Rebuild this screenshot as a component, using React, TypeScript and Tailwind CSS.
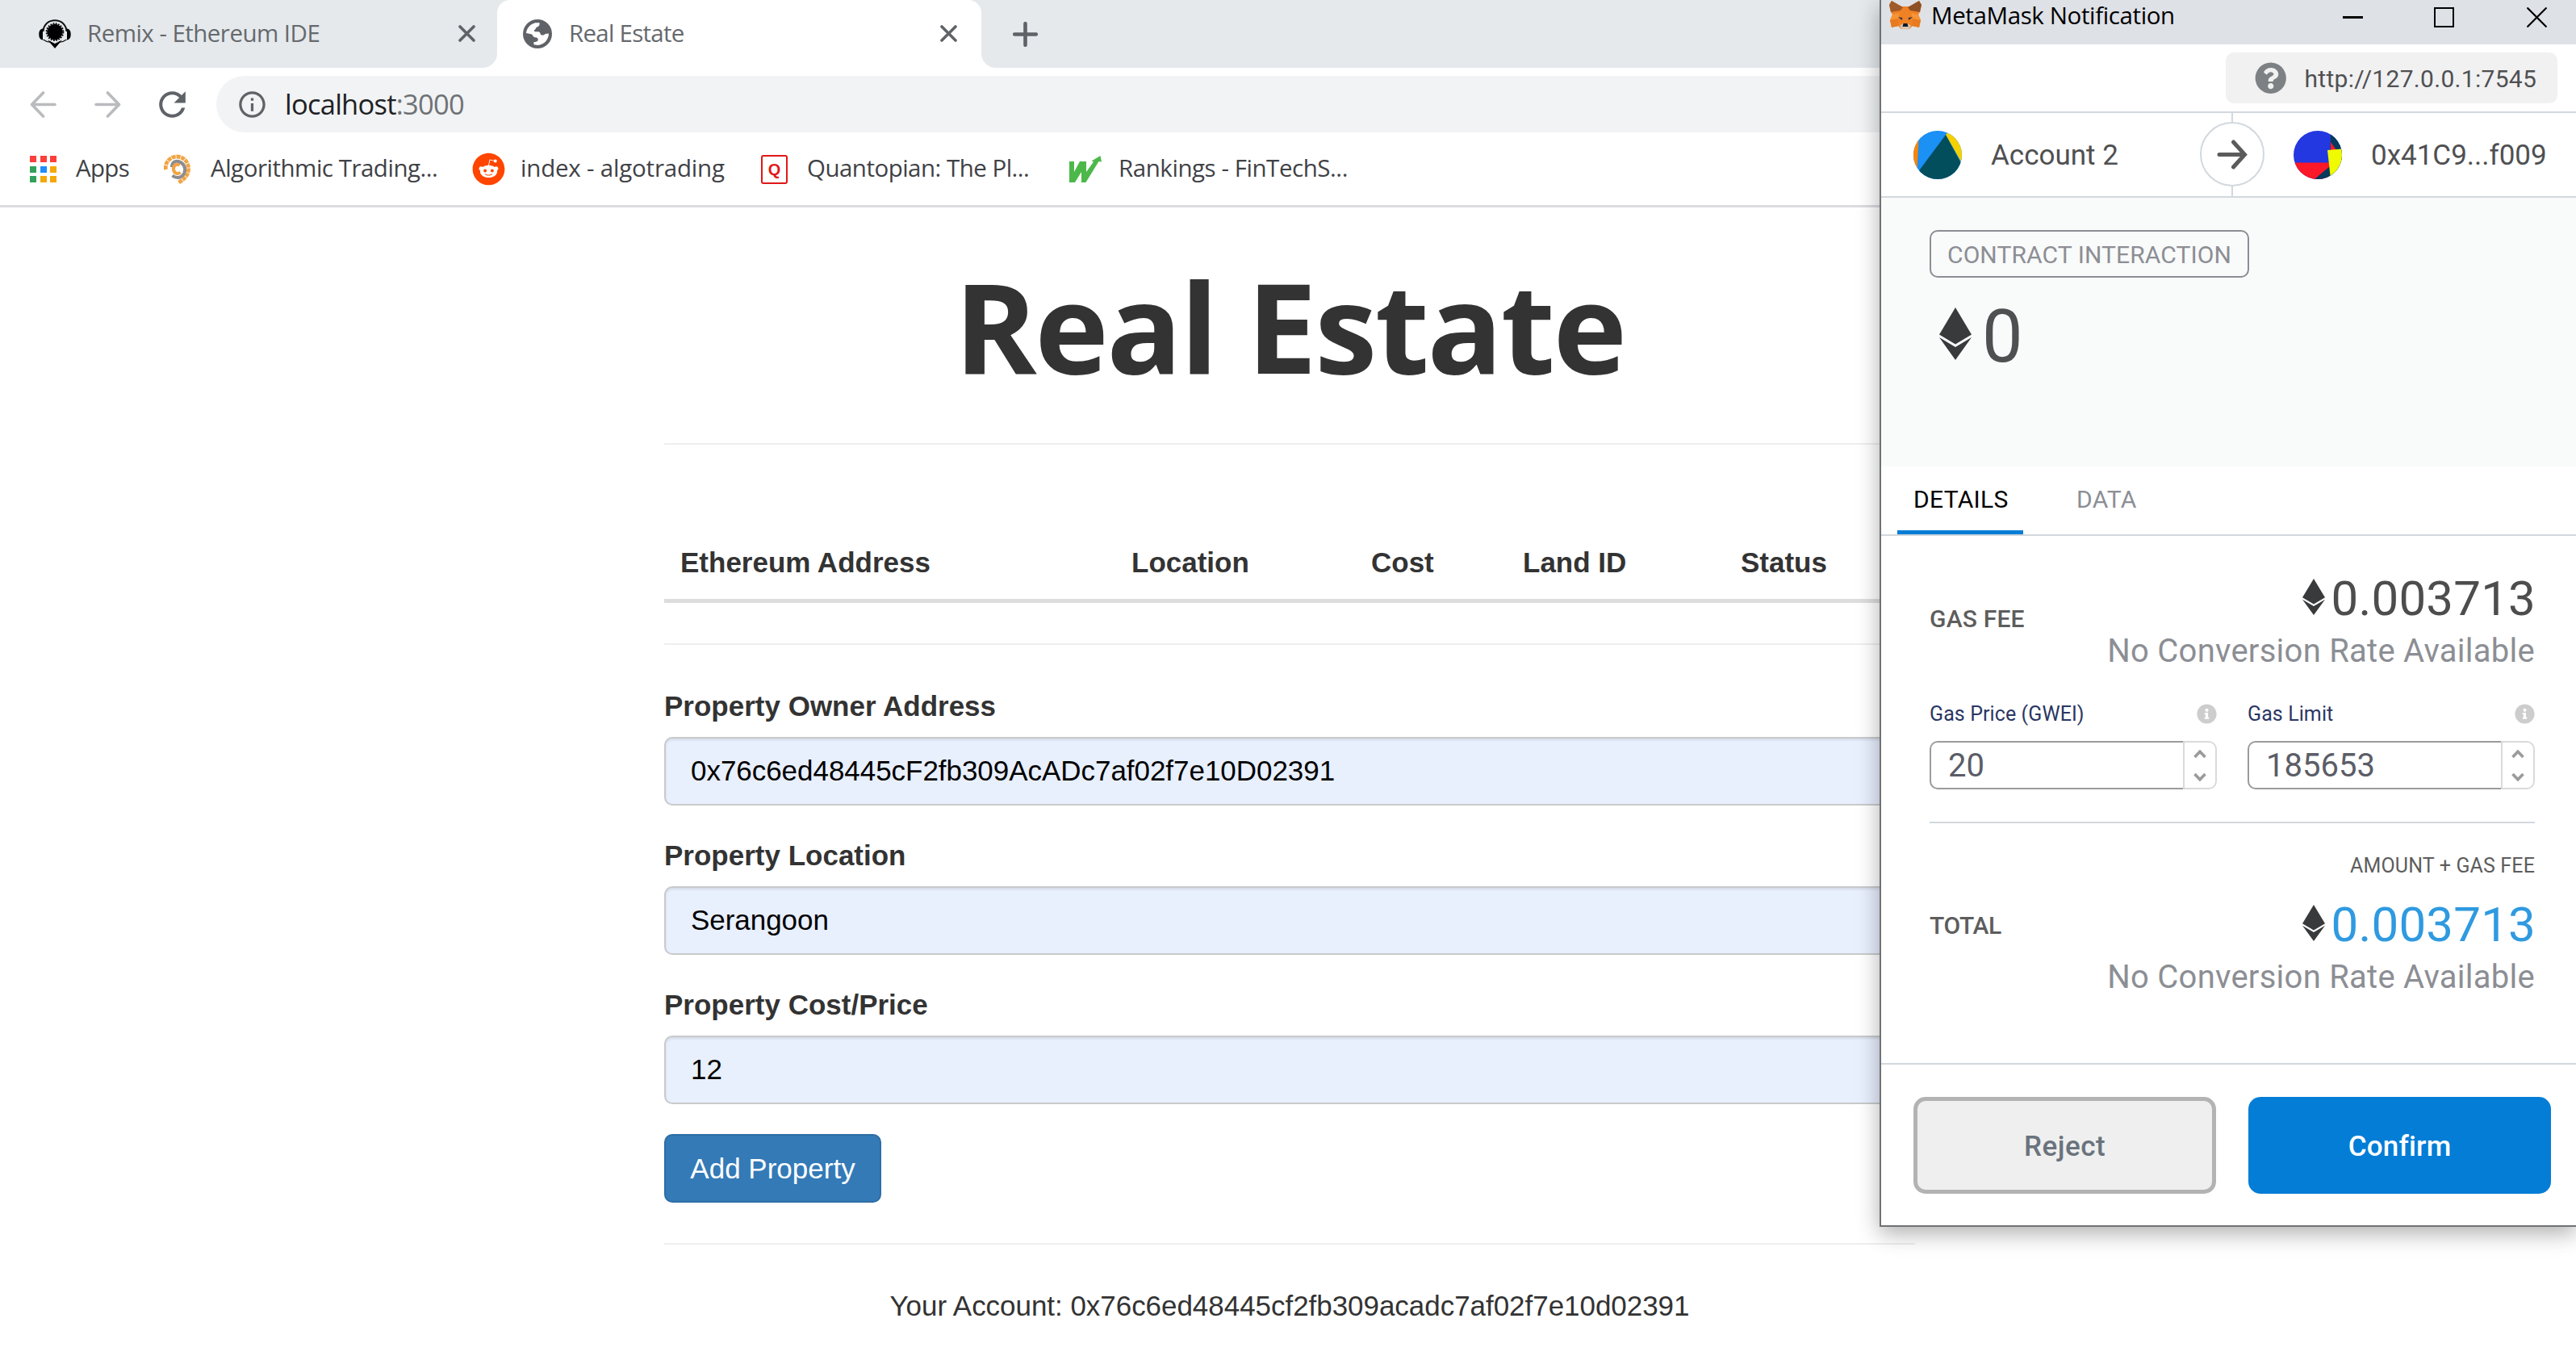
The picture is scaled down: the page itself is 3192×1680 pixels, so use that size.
import React from 'react';
import { FaReddit, FaQuestionCircle, FaInfoCircle } from 'react-icons/fa';
import { MdRefresh, MdInfoOutline } from 'react-icons/md';

function RemixIcon() {
  return (
    <svg width="40" height="36" viewBox="0 0 40 36" className="shrink-0">
      <path d="M5.5 15C6 6 12.500 1.200 20 1.200S34 6 34.500 15" fill="none" stroke="#111" strokeWidth="2" />
      <path d="M5 11.500C1.500 12 .3 14.500 .3 18.500S1.500 25 5 25.500ZM35 11.500c3.500.5 4.700 3 4.700 7S38.500 25 35 25.500Z" fill="#000" />
      <circle cx="20" cy="15.600" r="9.800" fill="#000" />
      <circle cx="20" cy="15.600" r="10.400" fill="none" stroke="#000" strokeWidth="1.800" strokeDasharray="1.800 1.500" />
      <path d="M5.500 25C9 27.500 12 28.500 15 28" fill="none" stroke="#111" strokeWidth="1.300" />
      <path d="M34.500 25C31 27.500 28 28.500 25 28" fill="none" stroke="#111" strokeWidth="1.300" />
      <path d="M11 25.500 20 30 29 25.500 20 36Z" fill="#000" />
    </svg>
  );
}

function GlobeIcon() {
  return (
    <svg width="36" height="36" viewBox="0 0 36 36" className="shrink-0">
      <circle cx="18" cy="18" r="18" fill="#5f6368" />
      <path
        d="M4 17C4.500 11 9 5.500 15.500 4.200L20.500 4.300C21 6.500 20 9 17.500 9.500C15.500 10 16.500 12.500 14 13.200C13 14.500 14.500 15.500 18 15.300C21 15.200 21.500 17 22 19C24 20 27 19.500 27.500 18L32 17.500C32 25 26 31.500 18.500 32L13.500 31.300V28C16 28 18.500 27.500 18.700 25.500C18.800 23 17.500 22.300 15 22.200C12 22 12.500 18.500 10 18.300Z"
        fill="#fff"
      />
    </svg>
  );
}

function CloseIcon() {
  return (
    <svg width="21" height="21" viewBox="0 0 21 21" className="shrink-0">
      <path d="M2 2 19 19M19 2 2 19" stroke="#5f6368" strokeWidth="3.600" strokeLinecap="round" />
    </svg>
  );
}

function ArrowNav({ flip = false }: { flip?: boolean }) {
  return (
    <svg width="33" height="33" viewBox="0 0 33 33" className={flip ? 'shrink-0 -scale-x-100' : 'shrink-0'}>
      <path d="M31 16.500H3M16.500 2 2.500 16.500 16.500 31" fill="none" stroke="#b9bbbe" strokeWidth="3.600" strokeLinecap="round" strokeLinejoin="round" />
    </svg>
  );
}

function AppsIcon() {
  const colors = [
    'bg-[#fc3f3b]', 'bg-[#fc3f3b]', 'bg-[#fc3f3b]',
    'bg-[#33a15a]', 'bg-[#1f8dfb]', 'bg-[#f4a80a]',
    'bg-[#33a15a]', 'bg-[#f4a80a]', 'bg-[#f4a80a]',
  ];
  return (
    <div className="mt-[3px] grid w-[33px] shrink-0 grid-cols-3 gap-[4.500px]">
      {colors.map((c, i) => (
        <div key={i} className={`size-[8px] ${c}`} />
      ))}
    </div>
  );
}

function SwirlIcon() {
  return (
    <svg width="34" height="38" viewBox="0 0 34 38" className="mt-[3px] shrink-0">
      <path d="M2.500 19C1 10 8 3 16 3C25 3 31 10 30.500 19C30 27 25 31 18.500 35" fill="none" stroke="#f2a444" strokeWidth="4.800" strokeDasharray="5 .8" />
      <path d="M10 16C10 10 14 8 18 9C25 11 27.500 17 25.500 23C23 29 16 31 10.500 26.500" fill="none" stroke="#8d8d90" strokeWidth="4" />
      <path d="M19.500 14C16 11 11.500 14 12 19C12.500 23.500 17 25.500 20.500 22.500" fill="none" stroke="#f2a444" strokeWidth="4" />
      <path d="M16 17 21 20 16.500 22Z" fill="#fff" />
    </svg>
  );
}

function TrendW() {
  return (
    <svg width="41" height="34" viewBox="0 0 41 34" className="mt-[3px] shrink-0">
      <path d="M0 7H6V20L13 7H21V20L30 7.500L27.500 6.500 38.500 0 40 7.500 36.500 7 20.500 33H15V20L7 33H0Z" fill="#4db84a" />
    </svg>
  );
}

function FoxIcon() {
  return (
    <svg width="40" height="36" viewBox="0 0 40 36" className="shrink-0">
      <path d="M3 0 0 5 2 14 4 17 1 24 3 33 11 31 15 35H25L29 31 37 33 39 24 36 17 38 14 40 5 37 0 25 7H15Z" fill="#f08125" />
      <path d="M3 0 0 5 2 14 14 12 17 8Z" fill="#a05a2a" />
      <path d="M37 0 40 5 38 14 26 12 23 8Z" fill="#8e4f25" />
      <path d="M4 17 13 15 11 22 1 24Z" fill="#f79435" />
      <path d="M36 17 27 15 29 22 39 24Z" fill="#f79435" />
      <path d="M1 24 11 22 12 31 3 33Z" fill="#e87a20" />
      <path d="M39 24 29 22 28 31 37 33Z" fill="#e87a20" />
      <path d="M11 20 16.500 21 15.500 24Z" fill="#303848" />
      <path d="M29 20 23.500 21 24.500 24Z" fill="#303848" />
      <path d="M13 31 17 28H23L27 31 24 35.500H16Z" fill="#d8c3b4" />
      <path d="M17.500 28H22.500L23.500 32H16.500Z" fill="#101820" />
    </svg>
  );
}

function EthIcon({ className }: { className: string }) {
  return (
    <svg viewBox="0 0 40 64" preserveAspectRatio="none" className={`shrink-0 ${className}`}>
      <path d="M20 0 40 33 20 44.800 0 33Z" fill="#393a3c" />
      <path d="M0 36.500 20 48.300 40 36.500 20 64Z" fill="#393a3c" />
    </svg>
  );
}

function Tab({ icon, title, className }: { icon: React.ReactNode; title: string; className: string }) {
  return (
    <div className={`flex h-full items-center pb-[1px] ${className}`}>
      {icon}
      <span className="flex-1 text-[29.5px] text-[#66696d]">{title}</span>
      <CloseIcon />
    </div>
  );
}

function BrowserChrome() {
  return (
    <header className="border-b-[3px] border-[#dbdce1] bg-white font-['Open_Sans',sans-serif] whitespace-nowrap">
      <div className="flex h-[84px]">
        <div className="w-[616px] rounded-br-[18px] bg-[#e5e9ec]">
          <Tab icon={<RemixIcon />} title="Remix - Ethereum IDE" className="gap-[20px] pr-[27px] pl-[48px] tracking-[-0.54px]" />
        </div>
        <div className="w-[600px] bg-linear-to-b from-[#e5e9ec] from-50% to-white to-50%">
          <div className="h-full rounded-t-[16px] bg-white">
            <Tab icon={<GlobeIcon />} title="Real Estate" className="gap-[21px] pr-[30px] pl-[32px] tracking-[-0.75px]" />
          </div>
        </div>
        <div className="flex flex-1 items-center rounded-bl-[18px] bg-[#e5e9ec] pl-[39px]">
          <svg width="31" height="31" viewBox="0 0 31 31">
            <path d="M15.500 2.200V28.800M2.200 15.500H28.800" stroke="#5f6368" strokeWidth="4.600" strokeLinecap="round" />
          </svg>
        </div>
      </div>

      <div className="mt-[10px] flex h-[70px] items-center pl-[37px]">
        <ArrowNav />
        <div className="ml-[47px]">
          <ArrowNav flip />
        </div>
        <MdRefresh className="ml-[39px] size-[49px] shrink-0 text-[#5f6368]" />
        <div className="ml-[30px] flex h-[70px] flex-1 items-center rounded-l-full bg-[#f1f3f4] pl-[25px]">
          <MdInfoOutline className="size-[39px] text-[#5f6368]" />
          <span className="ml-[21px] text-[34.5px] tracking-[-0.75px] text-[#6f7276]">
            <span className="text-[#202124]">localhost</span>:3000
          </span>
        </div>
      </div>

      <div className="flex h-[90px] items-center pb-[2px] pl-[37px] text-[29.5px] text-[#3f4246]">
        <AppsIcon />
        <span className="ml-[24px] w-[109px] tracking-[-0.7px]">Apps</span>
        <SwirlIcon />
        <span className="ml-[24px] w-[324px] tracking-[-0.49px]">Algorithmic Trading...</span>
        <FaReddit className="mt-[3px] size-[41px] shrink-0 text-[#ff4500]" />
        <span className="ml-[19px] w-[298px] tracking-[-0.2px]">index - algotrading</span>
        <span className="mt-[3px] flex h-[36px] w-[33px] shrink-0 items-center justify-center rounded-[3px] border-[2.500px] border-[#e01818] font-['Liberation_Sans',sans-serif] text-[20px] font-bold leading-none text-[#e01818]">
          Q
        </span>
        <span className="ml-[24px] w-[325px] tracking-[-0.52px]">Quantopian: The Pl...</span>
        <TrendW />
        <span className="ml-[20px] tracking-[-0.45px]">Rankings - FinTechS...</span>
      </div>
    </header>
  );
}

function Field({ label, value }: { label: string; value: string }) {
  return (
    <div className="mb-[37px]">
      <div className="h-[50px] leading-[50px] font-bold">{label}</div>
      <div className="mt-[13px] flex h-[85px] items-center rounded-[10px] border-2 border-[#c8cacc] bg-[#e8effd] pl-[31px] tracking-[-0.04px] text-black shadow-[inset_0_2px_3px_rgba(0,0,0,0.09)]">
        {value}
      </div>
    </div>
  );
}

function RealEstatePage() {
  return (
    <main className="ml-[823px] w-[1550px] font-['Liberation_Sans',sans-serif] text-[35px] text-[#333] whitespace-nowrap">
      <h1 className="text-center font-['Open_Sans',sans-serif] text-[155px] leading-[292px] font-bold tracking-[-2.5px]">Real Estate</h1>
      <div className="h-[2px] bg-[#eeeeee]" />
      <div className="mt-[101px] grid h-[95px] grid-cols-[559px_297px_188px_270px_1fr] border-b-[5px] border-[#dddddd] leading-[90px] font-bold">
        {['Ethereum Address', 'Location', 'Cost', 'Land ID', 'Status'].map((h) => (
          <div key={h} className="pl-[20px]">{h}</div>
        ))}
      </div>
      <div className="mt-[50px] mb-[51px] h-[2px] bg-[#eeeeee]" />
      <Field label="Property Owner Address" value="0x76c6ed48445cF2fb309AcADc7af02f7e10D02391" />
      <Field label="Property Location" value="Serangoon" />
      <Field label="Property Cost/Price" value="12" />
      <button className="block h-[85px] w-[269px] rounded-[10px] border-2 border-[#2e6da4] bg-[#337ab7] pt-[1px] text-center text-white">Add Property</button>
      <div className="mt-[50px] mb-[51px] h-[2px] bg-[#eeeeee]" />
      <p className="text-center leading-[50px] tracking-[-0.04px]">Your Account: 0x76c6ed48445cf2fb309acadc7af02f7e10d02391</p>
    </main>
  );
}

function GasInput({ label, value }: { label: string; value: string }) {
  return (
    <div className="w-[356px]">
      <div className="flex h-[37px] items-center justify-between">
        <span className="text-[25px] tracking-[0.1px] text-[#2b3763]">{label}</span>
        <FaInfoCircle className="size-[25px] text-[#cdcdcd]" />
      </div>
      <div className="mt-[15px] flex h-[60px] text-[#5b5d67]">
        <div className="flex flex-1 items-center rounded-l-[10px] border-2 border-r-0 border-[#9b9b9b] pt-[1px] pl-[21px] text-[40px]">{value}</div>
        <div className="flex w-[42px] flex-col items-center justify-center gap-[17px] rounded-r-[10px] border-2 border-[#dadada]">
          <svg width="16" height="11" viewBox="0 0 16 11">
            <path d="M1.500 9 8 2.200 14.500 9" fill="none" stroke="#9b9b9b" strokeWidth="3.600" />
          </svg>
          <svg width="16" height="11" viewBox="0 0 16 11">
            <path d="M1.500 2 8 8.800 14.500 2" fill="none" stroke="#9b9b9b" strokeWidth="3.600" />
          </svg>
        </div>
      </div>
    </div>
  );
}

function Amount({ className }: { className: string }) {
  return (
    <div>
      <div className="-mr-px flex h-[66px] items-center justify-end">
        <EthIcon className="mb-[6px] h-[45px] w-[28px]" />
        <span className={`ml-[8px] text-[60px] leading-[66px] tracking-[0.2px] ${className}`}>0.003713</span>
      </div>
      <div className="text-right text-[40px] leading-[63px] tracking-[0.26px] text-[#8c8e94]">No Conversion Rate Available</div>
    </div>
  );
}

function MetaMaskWindow() {
  return (
    <aside className="absolute top-0 left-[2329px] h-[1520px] w-[863px] border-b-2 border-l-2 border-[#6f7275] bg-white font-['Roboto',sans-serif] text-[30px] text-[#4f5052] whitespace-nowrap shadow-[0_8px_26px_rgba(0,0,0,0.32)]">
      <div className="flex h-[55px] items-center bg-[#dee1e6] pb-[18px] pl-[10px]">
        <FoxIcon />
        <span className="mt-px ml-[12px] font-['Open_Sans',sans-serif] text-[29.5px] leading-[36px] tracking-[-0.38px] text-black">MetaMask Notification</span>
        <div className="mt-[6px] mr-[36px] ml-auto flex items-center">
          <div className="h-[2.500px] w-[25px] bg-black" />
          <div className="ml-[88px] size-[25px] border-[2.500px] border-black" />
          <svg width="25" height="25" viewBox="0 0 25 25" className="ml-[90px]">
            <path d="M.5.5 24.500 24.500M24.500.5.5 24.500" stroke="#000" strokeWidth="2.200" />
          </svg>
        </div>
      </div>

      <div className="flex h-[85px] items-center justify-end border-b-2 border-[#d2d8dd] pr-[23px]">
        <div className="flex h-[63px] w-[411px] items-center rounded-[10px] bg-[#f1f1f2] pl-[36px]">
          <FaQuestionCircle className="size-[39.5px] text-[#7d8184]" />
          <span className="mt-[2px] ml-[22px] tracking-[0.3px]">http://127.0.0.1:7545</span>
        </div>
      </div>

      <div className="grid h-[105px] grid-cols-[395px_80px_1fr] border-b-2 border-[#d2d8dd] text-[35px]">
        <div className="flex items-center pl-[40px]">
          <svg width="60" height="60" viewBox="0 0 60 60" className="rounded-full">
            <rect width="60" height="60" fill="#1b90f5" />
            <path d="M0 0H7L4 60H0Z" fill="#fb8500" />
            <path d="M40 5 44 0H60V40Z" fill="#f5d000" />
            <path d="M40 5 60 42V60H0L5 52Z" fill="#034e5c" />
          </svg>
          <span className="mt-[3px] ml-[36px]">Account 2</span>
        </div>
        <div className="flex flex-col items-center">
          <div className="h-[11px] w-[2px] bg-[#d2d8dd]" />
          <div className="flex size-[80px] items-center justify-center rounded-full border-2 border-[#d2d8dd]">
            <svg width="38" height="37" viewBox="0 0 38 37">
              <path d="M3 18.500H34M20.500 3 34.500 18.500 20.500 34" fill="none" stroke="#5b5b5b" strokeWidth="5" strokeLinecap="round" />
            </svg>
          </div>
          <div className="h-[12px] w-[2px] bg-[#d2d8dd]" />
        </div>
        <div className="flex items-center pl-[36px]">
          <svg width="60" height="60" viewBox="0 0 60 60" className="rounded-full">
            <rect width="60" height="60" fill="#2338e0" />
            <path d="M0 39.500H46V60H0Z" fill="#fb1828" />
            <path d="M46 5V0H60V60H26L45 44Z" fill="#073a5c" />
            <path d="M46 14 53 24H46Z" fill="#fb1828" />
            <path d="M42 24 60 22.500V60H46Z" fill="#f0fa00" />
          </svg>
          <span className="mt-[3px] ml-[36px]">0x41C9...f009</span>
        </div>
      </div>

      <div className="h-[333px] bg-[#f9fafa] pt-[40px] pl-[60px]">
        <div className="flex h-[59px] w-[396px] items-center justify-center rounded-[10px] border-2 border-[#8c8e94] pt-[2px] tracking-[0.1px] text-[#8c8e94]">CONTRACT INTERACTION</div>
        <div className="mt-[23px] flex h-[100px] items-center">
          <EthIcon className="mb-[7px] ml-[12px] h-[65px] w-[40px]" />
          <span className="mt-[2px] ml-[13px] text-[90px] leading-[100px]">0</span>
        </div>
      </div>

      <div className="flex h-[86px] border-b-2 border-[#d2d8dd] pl-[20px] leading-[81px] tracking-[0.3px]">
        <div className="h-[84px] w-[156px] border-b-[5px] border-[#037dd6] pl-[20px] text-black">DETAILS</div>
        <div className="pl-[66px] text-[#8c8e94]">DATA</div>
      </div>

      <div className="pr-[51px] pl-[60px]">
        <div className="mt-[45px] flex items-center justify-between">
          <span className="pb-[15px] font-medium tracking-[0.2px] text-[#5d5d5d]">GAS FEE</span>
          <Amount className="text-[#4d4d4d]" />
        </div>
        <div className="mt-[28px] flex justify-between">
          <GasInput label="Gas Price (GWEI)" value="20" />
          <GasInput label="Gas Limit" value="185653" />
        </div>
        <div className="mt-[40px] h-[2px] bg-[#d2d8dd]" />
        <div className="mt-[33px] text-right text-[25px] leading-[40px] tracking-[0.14px] text-[#5d5d5d]">AMOUNT + GAS FEE</div>
        <div className="mt-[20px] flex items-center justify-between">
          <span className="pb-[62px] font-medium tracking-[-0.4px] text-[#5d5d5d]">TOTAL</span>
          <Amount className="text-[#2f9ae0]" />
        </div>
      </div>

      <div className="mt-[75px] flex gap-[40px] border-t-2 border-[#d2d8dd] pt-[40px] pl-[40px] text-[35px] font-medium">
        <button className="h-[120px] w-[375px] rounded-[15px] border-[5px] border-[#b3b3b3] bg-[#efefef] pt-[5px] tracking-[0.5px] text-[#6a737d]">Reject</button>
        <button className="h-[120px] w-[375px] rounded-[15px] bg-[#037dd6] pt-[5px] tracking-[0.2px] text-white">Confirm</button>
      </div>
    </aside>
  );
}

export default function App() {
  return (
    <div className="relative h-[1680px] w-[3192px] overflow-hidden bg-white">
      <BrowserChrome />
      <RealEstatePage />
      <MetaMaskWindow />
    </div>
  );
}
